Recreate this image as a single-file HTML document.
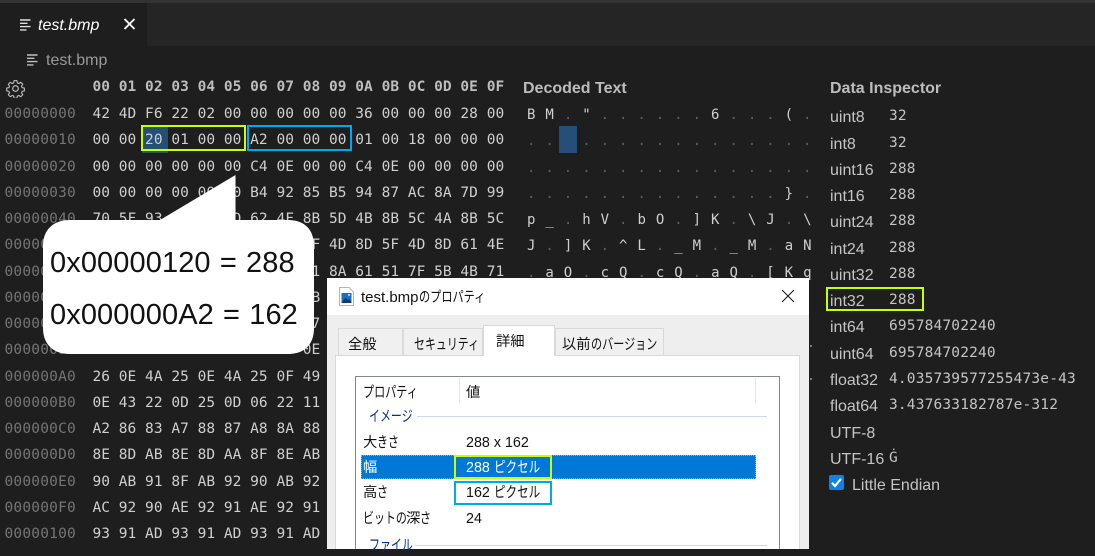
<!DOCTYPE html>
<html lang="ja"><head><meta charset="utf-8"><title>test.bmp</title>
<style>
html,body{margin:0;padding:0}
body{width:1095px;height:549px;overflow:hidden;background:#1e1e1e;position:relative;font-family:"Liberation Sans","Noto Sans CJK JP",sans-serif}
.a,.h,.ad,.d,.l,.v,.t{position:absolute;white-space:pre;line-height:20px;margin:0}
.h{left:92.5px;font:14.5px/20px "DejaVu Sans Mono",monospace;letter-spacing:.03px;color:#cfcfcf}
.hb{font-weight:bold;color:#bdbdbd}
.ad{left:4.5px;font:14.5px/20px "DejaVu Sans Mono",monospace;letter-spacing:.2px;color:#757575}
.d{left:527px;font:14px/20px "DejaVu Sans Mono",monospace;letter-spacing:9.97px;color:#cfcfcf}
.d i{font-style:normal;color:#5e5e5e}
.l{left:830px;font-size:16px;color:#c4c4c4;margin-top:1px}
.v{left:889px;font:14.5px/20px "DejaVu Sans Mono",monospace;letter-spacing:.17px;color:#c4c4c4}
.b{position:absolute;box-sizing:border-box;border:2px solid}
.g{border-color:#c6ff00}.c{border-color:#00a8f0}
.r{position:absolute}
.t{color:#111;font-size:14.3px;margin-top:1px}
.k{display:inline-block;transform:scaleX(.73);transform-origin:0 50%;font-size:15px}
.k2{transform:scaleX(.77)}
.w{position:absolute;left:0;width:1095px;height:0}
</style></head><body>
<div class="r" style="left:0;top:0;width:1095px;height:3px;background:#333"></div>
<div class="r" style="left:0;top:3px;width:1095px;height:43px;background:#252526"></div>
<div class="r" style="left:0;top:3px;width:147px;height:43px;background:#1e1e1e"></div>
<svg class="r" style="left:20px;top:19px" width="11" height="12" viewBox="0 0 11 12"><path d="M0 1H10.500M0 4.300H7.500M0 7.600H10.500M0 10.900H6.500" stroke="#e0e0e0" stroke-width="1.400" fill="none"/></svg>
<div class="a" style="left:38px;top:16px;font-size:16px;font-style:italic;color:#fff">test.bmp</div>
<svg class="r" style="left:123px;top:18px" width="13" height="12" viewBox="0 0 13 12"><path d="M1.500 1 L11.500 11 M11.500 1 L1.500 11" stroke="#f4f4f4" stroke-width="1.900" fill="none"/></svg>
<svg class="r" style="left:27px;top:54px" width="11" height="12" viewBox="0 0 11 12"><path d="M0 1H10.500M0 4.300H7.500M0 7.600H10.500M0 10.900H6.500" stroke="#c0c0c0" stroke-width="1.400" fill="none"/></svg>
<div class="a" style="left:46px;top:51px;font-size:16px;color:#9a9a9a">test.bmp</div>
<svg class="r" style="left:6px;top:79px" width="19" height="19" viewBox="0 0 19 19"><path d="M8 1.200h3l.4 2.300 1.600.7 2-1.300 2.100 2.100-1.300 2 .7 1.600 2.300.4v3l-2.300.4-.7 1.600 1.300 2-2.100 2.100-2-1.300-1.600.7-.4 2.300H8l-.4-2.300-1.600-.7-2 1.300-2.100-2.100 1.300-2-.7-1.600-2.300-.4v-3l2.300-.4.7-1.600-1.300-2L3.900 2.900l2 1.300 1.600-.7z" transform="translate(.5 .5) scale(.95)" fill="none" stroke="#c5c5c5" stroke-width="1.100"/><circle cx="9.500" cy="9.500" r="2.800" fill="none" stroke="#c5c5c5" stroke-width="1.100"/></svg>

<div class="r" style="left:142px;top:126px;width:26px;height:27px;background:#264f78"></div>
<div class="r" style="left:559px;top:126px;width:18px;height:27px;background:#264f78"></div>

<div class="w" style="top:1px">
<div class="h hb" style="top:76px">00 01 02 03 04 05 06 07 08 09 0A 0B 0C 0D 0E 0F</div>
<div class="ad" style="top:103px">00000000</div><div class="h" style="top:103px">42 4D F6 22 02 00 00 00 00 00 36 00 00 00 28 00</div>
<div class="ad" style="top:129px">00000010</div><div class="h" style="top:129px">00 00 20 01 00 00 A2 00 00 00 01 00 18 00 00 00</div>
<div class="ad" style="top:156px">00000020</div><div class="h" style="top:156px">00 00 00 00 00 00 C4 0E 00 00 C4 0E 00 00 00 00</div>
<div class="ad" style="top:182px">00000030</div><div class="h" style="top:182px">00 00 00 00 00 00 B4 92 85 B5 94 87 AC 8A 7D 99</div>
<div class="ad" style="top:208px">00000040</div><div class="h" style="top:208px">70 5F 93 68 56 8D 62 4F 8B 5D 4B 8B 5C 4A 8B 5C</div>
<div class="ad" style="top:234px">00000050</div><div class="h" style="top:234px">4A 8D 5D 4B 8D 5E 4C 8D 5F 4D 8D 5F 4D 8D 61 4E</div>
<div class="ad" style="top:261px">00000060</div><div class="h" style="top:261px">8A 61 4F 8A 63 51 8A 63 51 8A 61 51 7F 5B 4B 71</div>
<div class="ad" style="top:287px">00000070</div><div class="h" style="top:287px">00 00 00 00 00 00 00 00 5B</div>
<div class="ad" style="top:313px">00000080</div><div class="h" style="top:313px">00 00 00 00 00 00 00 00 27</div>
<div class="ad" style="top:339px">00000090</div><div class="h" style="top:339px">00 00 00 00 00 00 00 00 0E</div>
<div class="ad" style="top:366px">000000A0</div><div class="h" style="top:366px">26 0E 4A 25 0E 4A 25 0F 49</div>
<div class="ad" style="top:392px">000000B0</div><div class="h" style="top:392px">0E 43 22 0D 25 0D 06 22 11</div>
<div class="ad" style="top:418px">000000C0</div><div class="h" style="top:418px">A2 86 83 A7 88 87 A8 8A 88</div>
<div class="ad" style="top:444px">000000D0</div><div class="h" style="top:444px">8E 8D AB 8E 8D AA 8F 8E AB</div>
<div class="ad" style="top:471px">000000E0</div><div class="h" style="top:471px">90 AB 91 8F AB 92 90 AB 92</div>
<div class="ad" style="top:497px">000000F0</div><div class="h" style="top:497px">AC 92 90 AE 92 91 AE 92 91</div>
<div class="ad" style="top:523px">00000100</div><div class="h" style="top:523px">93 91 AD 93 91 AD 93 91 AD</div>
</div>

<div class="a" style="left:523px;top:79px;font-size:16px;font-weight:bold;color:#bdbdbd">Decoded Text</div>
<div class="w" style="top:2px">
<div class="d" style="top:103px">BM<i>.</i>"<i>......</i>6<i>...</i>(<i>.</i></div>
<div class="d" style="top:129px"><i>.. .............</i></div>
<div class="d" style="top:156px"><i>................</i></div>
<div class="d" style="top:182px"><i>..............</i>}<i>.</i></div>
<div class="d" style="top:208px">p_<i>.</i>hV<i>.</i>bO<i>.</i>]K<i>.</i>\J<i>.</i>\</div>
<div class="d" style="top:234px">J<i>.</i>]K<i>.</i>^L<i>.</i>_M<i>.</i>_M<i>.</i>aN</div>
<div class="d" style="top:261px"><i>.</i>aO<i>.</i>cQ<i>.</i>cQ<i>.</i>aQ<i>.</i>[Kq</div>
</div>

<div class="a" style="left:830px;top:79px;font-size:16px;font-weight:bold;color:#bdbdbd">Data Inspector</div>
<div class="w" style="top:1px">
<div class="l" style="top:106px">uint8</div><div class="v" style="top:105px">32</div>
<div class="l" style="top:133px">int8</div><div class="v" style="top:132px">32</div>
<div class="l" style="top:159px">uint16</div><div class="v" style="top:158px">288</div>
<div class="l" style="top:185px">int16</div><div class="v" style="top:184px">288</div>
<div class="l" style="top:211px">uint24</div><div class="v" style="top:210px">288</div>
<div class="l" style="top:238px">int24</div><div class="v" style="top:237px">288</div>
<div class="l" style="top:264px">uint32</div><div class="v" style="top:263px">288</div>
<div class="l" style="top:290px">int32</div><div class="v" style="top:289px">288</div>
<div class="l" style="top:316px">int64</div><div class="v" style="top:315px">695784702240</div>
<div class="l" style="top:343px">uint64</div><div class="v" style="top:342px">695784702240</div>
<div class="l" style="top:369px">float32</div><div class="v" style="top:368px">4.035739577255473e-43</div>
<div class="l" style="top:395px">float64</div><div class="v" style="top:394px">3.437633182787e-312</div>
<div class="l" style="top:422px">UTF-8</div>
<div class="l" style="top:448px">UTF-16</div><div class="v" style="top:447px">Ġ</div>
<div class="l" style="left:852px;top:474px">Little Endian</div>
</div>
<div class="r" style="left:829px;top:475px;width:15px;height:15px;background:#0a84e8;border-radius:2px"></div>
<svg class="r" style="left:829px;top:475px" width="15" height="15" viewBox="0 0 15 15"><path d="M3 7.800 L6 11 L12 3.800" stroke="#fff" stroke-width="2.200" fill="none"/></svg>

<div class="b g" style="left:141px;top:125px;width:105px;height:26px"></div>
<div class="b c" style="left:247px;top:125px;width:105px;height:26px"></div>
<div class="b g" style="left:826px;top:287px;width:98px;height:24px"></div>
<div class="r" style="left:810px;top:345px;width:2px;height:2px;background:#777"></div>
<div class="r" style="left:810px;top:378px;width:2px;height:2px;background:#777"></div>

<!-- dialog -->
<div class="r" style="left:327px;top:278px;width:482px;height:271px;background:#fff"></div>
<div class="r" style="left:327px;top:315px;width:482px;height:234px;background:#eeeeee"></div>
<svg class="r" style="left:339px;top:287px" width="15" height="19" viewBox="0 0 15 19"><path d="M.5.5H10L14.500 5V18.500H.5Z" fill="#fff" stroke="#b5b5b5"/><rect x="2.500" y="6" width="10" height="10" fill="#1a6fc0"/><path d="M2.500 16L6.500 10.500L9 13L10.500 12L12.500 16Z" fill="#123a70"/><rect x="9" y="7" width="2" height="2" fill="#9fd4f5"/></svg>
<div class="t" style="left:361px;top:287px;font-size:15px">test.bmp<span class="k k2" style="font-size:14.500px">のプロパティ</span></div>
<svg class="r" style="left:781px;top:289px" width="14" height="14" viewBox="0 0 14 14"><path d="M1 1L13 13M13 1L1 13" stroke="#111" stroke-width="1" fill="none"/></svg>

<div class="r" style="left:338px;top:328px;width:65px;height:28px;box-sizing:border-box;border:1px solid #d9d9d9;background:#f0f0f0"></div>
<div class="r" style="left:403px;top:328px;width:80px;height:28px;box-sizing:border-box;border:1px solid #d9d9d9;background:#f0f0f0"></div>
<div class="r" style="left:555px;top:328px;width:109px;height:28px;box-sizing:border-box;border:1px solid #d9d9d9;background:#f0f0f0"></div>
<div class="r" style="left:335px;top:355px;width:465px;height:194px;box-sizing:border-box;border:1px solid #d9d9d9;border-bottom:0;background:#fff"></div>
<div class="r" style="left:483px;top:325px;width:72px;height:31px;box-sizing:border-box;border:1px solid #d9d9d9;border-bottom:0;background:#fff"></div>
<div class="t" style="left:348px;top:334px">全般</div>
<div class="t" style="left:414px;top:334px"><span class="k">セキュリティ</span></div>
<div class="t" style="left:496px;top:331px">詳細</div>
<div class="t" style="left:562px;top:334px">以前<span class="k" style="transform:scaleX(.74)">のバージョン</span></div>

<div class="r" style="left:355px;top:376px;width:425px;height:173px;box-sizing:border-box;border:1px solid #828790;border-bottom:0;background:#fff"></div>
<div class="r" style="left:459px;top:378px;width:1px;height:25px;background:#e5e5e5"></div>
<div class="r" style="left:755px;top:378px;width:1px;height:25px;background:#e5e5e5"></div>
<div class="t" style="left:363px;top:382px"><span class="k" style="transform:scaleX(.74)">プロパティ</span></div>
<div class="t" style="left:466px;top:382px">値</div>
<div class="t" style="left:369px;top:406px;color:#003399"><span class="k">イメージ</span></div>
<div class="r" style="left:417px;top:416px;width:350px;height:1px;background:#d0d7e5"></div>
<div class="t" style="left:363px;top:432px">大<span class="k">きさ</span></div>
<div class="t" style="left:466px;top:432px">288 x 162</div>
<div class="r" style="left:361px;top:455px;width:395px;height:24px;box-sizing:border-box;background:#0078d7;border:1px dotted #e8a050"></div>
<div class="t" style="left:363px;top:457px;color:#fff">幅</div>
<div class="t" style="left:466px;top:457px;color:#fff">288 <span class="k k2">ピクセル</span></div>
<div class="b g" style="left:454px;top:455px;width:98px;height:24px"></div>
<div class="b c" style="left:454px;top:481px;width:98px;height:24px"></div>
<div class="t" style="left:363px;top:482px">高<span class="k">さ</span></div>
<div class="t" style="left:466px;top:482px">162 <span class="k k2">ピクセル</span></div>
<div class="t" style="left:363px;top:508px"><span class="k">ビットの</span></div>
<div class="t" style="left:406px;top:508px">深<span class="k">さ</span></div>
<div class="t" style="left:466px;top:508px">24</div>
<div class="t" style="left:369px;top:535px;color:#003399"><span class="k">ファイル</span></div>
<div class="r" style="left:415px;top:545px;width:352px;height:1px;background:#d0d7e5"></div>

<!-- bubble -->
<svg class="r" style="left:0;top:0" width="400" height="400" viewBox="0 0 400 400"><path d="M70 220H160L235.500 175V220H288C305 220 314 230 314 246V328C314 344 305 354 288 354H70C53 354 43 344 43 328V246C43 230 53 220 70 220Z" fill="#fff"/></svg>
<div class="a" style="left:50px;top:243px;font-size:29px;line-height:40px;color:#111;letter-spacing:.1px;word-spacing:1px">0x00000120 = 288</div>
<div class="a" style="left:50px;top:295px;font-size:29px;line-height:40px;color:#111;letter-spacing:.1px;word-spacing:1px">0x000000A2 = 162</div>
</body></html>
